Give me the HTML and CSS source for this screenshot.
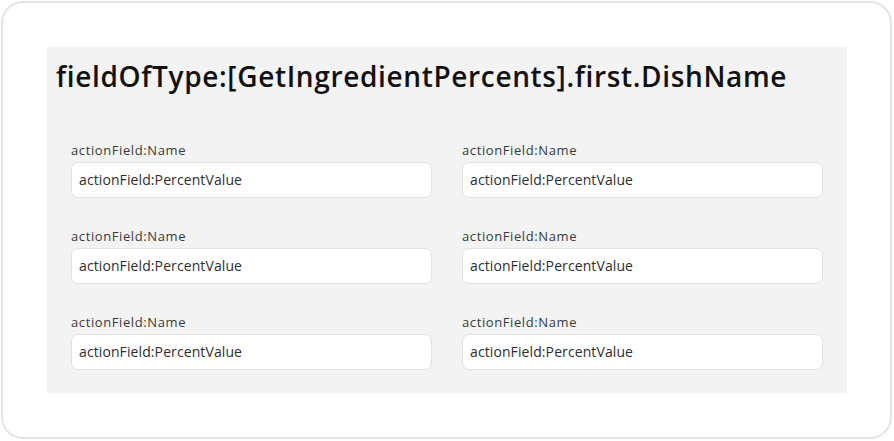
FILE: index.html
```html
<!DOCTYPE html>
<html lang="en">
<head>
<meta charset="utf-8">
<title>Dish ingredients</title>
<link rel="stylesheet" href="styles.css">
</head>
<body>
<div class="card">
  <section class="panel">
    <h1 class="title">fieldOfType:[GetIngredientPercents].first.DishName</h1>
    <div class="grid">
      <div class="field">
        <div class="label">actionField:Name</div>
        <div class="value">actionField:PercentValue</div>
      </div>
      <div class="field">
        <div class="label">actionField:Name</div>
        <div class="value">actionField:PercentValue</div>
      </div>
      <div class="field">
        <div class="label">actionField:Name</div>
        <div class="value">actionField:PercentValue</div>
      </div>
      <div class="field">
        <div class="label">actionField:Name</div>
        <div class="value">actionField:PercentValue</div>
      </div>
      <div class="field">
        <div class="label">actionField:Name</div>
        <div class="value">actionField:PercentValue</div>
      </div>
      <div class="field">
        <div class="label">actionField:Name</div>
        <div class="value">actionField:PercentValue</div>
      </div>
    </div>
  </section>
</div>
</body>
</html>
```
FILE: styles.css
```css
* { box-sizing: border-box; }
html, body { margin: 0; background: #ffffff; }
body {
  padding: 1px 2px 2px 1px;
  font-family: "Open Sans", "Liberation Sans", sans-serif;
}
.card {
  width: 891px;
  height: 438px;
  border: 2px solid #e2e4e7;
  border-radius: 22px;
  background: #ffffff;
  padding: 44px 43px 0 44px;
}
.panel {
  width: 800px;
  height: 346px;
  background: #f3f3f3;
  padding: 8px 24px 23px 24px;
}
.title {
  margin: 0 0 44px -15px;
  font-size: 28px;
  line-height: 42px;
  font-weight: 600;
  letter-spacing: 0.65px;
  color: #111111;
  white-space: nowrap;
}
.grid {
  display: grid;
  grid-template-columns: 361px 361px;
  column-gap: 30px;
  row-gap: 29px;
}
.field { display: flex; flex-direction: column; }
.label {
  font-size: 13px;
  line-height: 18px;
  letter-spacing: 0.6px;
  color: #3a3a3a;
  margin-bottom: 3px;
}
.value {
  height: 36px;
  border: 1px solid #e1e1e1;
  border-radius: 7px;
  background: #ffffff;
  padding-left: 7px;
  font-size: 14px;
  line-height: 34px;
  letter-spacing: 0.1px;
  color: #2e2e2e;
}
```
